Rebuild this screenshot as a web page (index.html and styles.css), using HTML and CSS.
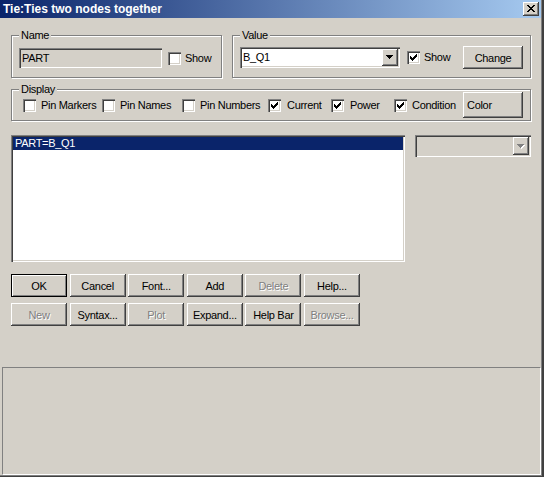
FILE: index.html
```html
<!DOCTYPE html>
<html>
<head>
<meta charset="utf-8">
<title>Tie:Ties two nodes together</title>
<link rel="stylesheet" href="styles.css">
</head>
<body>
<div class="window">
  <div class="titlebar">
    <span class="title">Tie:Ties two nodes together</span>
    <span class="close-btn">
      <svg class="x-icon" width="8" height="7" viewBox="0 0 8 7" shape-rendering="crispEdges"><path fill="#000" d="M0 0h2v1h-2z M6 0h2v1h-2z M1 1h2v1h-2z M5 1h2v1h-2z M2 2h4v1h-4z M3 3h2v1h-2z M2 4h4v1h-4z M1 5h2v1h-2z M5 5h2v1h-2z M0 6h2v1h-2z M6 6h2v1h-2z"/></svg>
    </span>
  </div>

  <div class="content">
    <div class="top-row">
      <div class="group name-group">
        <span class="legend">Name</span>
        <div class="group-row">
          <div class="field sunken">PART</div>
          <span class="checkbox sunken show-cb"></span>
          <span class="cb-label">Show</span>
        </div>
      </div>
      <div class="group value-group">
        <span class="legend">Value</span>
        <div class="group-row">
          <div class="combo sunken">
            <span class="combo-text">B_Q1</span>
            <span class="drop-btn raised">
              <svg class="arrow" width="7" height="4" viewBox="0 0 7 4" shape-rendering="crispEdges"><path fill="#000" d="M0 0h7v1h-7z M1 1h5v1h-5z M2 2h3v1h-3z M3 3h1v1h-1z"/></svg>
            </span>
          </div>
          <span class="checkbox sunken value-cb">
            <svg class="check" width="7" height="7" viewBox="0 0 7 7" shape-rendering="crispEdges"><path fill="#000" d="M6 0h1v1h-1z M5 1h2v1h-2z M0 2h1v1h-1z M4 2h3v1h-3z M0 3h2v1h-2z M3 3h3v1h-3z M0 4h5v1h-5z M1 5h3v1h-3z M2 6h1v1h-1z"/></svg>
          </span>
          <span class="cb-label">Show</span>
          <button class="btn raised change-btn">Change</button>
        </div>
      </div>
    </div>

    <div class="group display-group">
      <span class="legend">Display</span>
      <div class="display-row">
        <label class="cb-item"><span class="checkbox sunken"></span><span class="cb-label wide">Pin Markers</span></label>
        <label class="cb-item"><span class="checkbox sunken"></span><span class="cb-label wide">Pin Names</span></label>
        <label class="cb-item"><span class="checkbox sunken"></span><span class="cb-label wide">Pin Numbers</span></label>
        <label class="cb-item"><span class="checkbox sunken"><svg class="check" width="7" height="7" viewBox="0 0 7 7" shape-rendering="crispEdges"><path fill="#000" d="M6 0h1v1h-1z M5 1h2v1h-2z M0 2h1v1h-1z M4 2h3v1h-3z M0 3h2v1h-2z M3 3h3v1h-3z M0 4h5v1h-5z M1 5h3v1h-3z M2 6h1v1h-1z"/></svg></span><span class="cb-label wider">Current</span></label>
        <label class="cb-item"><span class="checkbox sunken"><svg class="check" width="7" height="7" viewBox="0 0 7 7" shape-rendering="crispEdges"><path fill="#000" d="M6 0h1v1h-1z M5 1h2v1h-2z M0 2h1v1h-1z M4 2h3v1h-3z M0 3h2v1h-2z M3 3h3v1h-3z M0 4h5v1h-5z M1 5h3v1h-3z M2 6h1v1h-1z"/></svg></span><span class="cb-label wider">Power</span></label>
        <label class="cb-item"><span class="checkbox sunken"><svg class="check" width="7" height="7" viewBox="0 0 7 7" shape-rendering="crispEdges"><path fill="#000" d="M6 0h1v1h-1z M5 1h2v1h-2z M0 2h1v1h-1z M4 2h3v1h-3z M0 3h2v1h-2z M3 3h3v1h-3z M0 4h5v1h-5z M1 5h3v1h-3z M2 6h1v1h-1z"/></svg></span><span class="cb-label wide">Condition</span></label>
        <button class="btn raised color-btn">Color</button>
      </div>
    </div>

    <div class="list-row">
      <div class="listbox sunken">
        <div class="list-item selected">PART=B_Q1</div>
      </div>
      <div class="combo sunken disabled-combo">
        <span class="combo-text"></span>
        <span class="drop-btn raised">
          <svg class="arrow" width="8" height="5" viewBox="0 0 8 5" shape-rendering="crispEdges"><path fill="#fff" d="M1 1h7v1h-7z M2 2h5v1h-5z M3 3h3v1h-3z M4 4h1v1h-1z"/><path fill="#808080" d="M0 0h7v1h-7z M1 1h5v1h-5z M2 2h3v1h-3z M3 3h1v1h-1z"/></svg>
        </span>
      </div>
    </div>

    <div class="buttons">
      <button class="btn default-btn">OK</button>
      <button class="btn raised">Cancel</button>
      <button class="btn raised">Font...</button>
      <button class="btn raised">Add</button>
      <button class="btn raised disabled">Delete</button>
      <button class="btn raised">Help...</button>
      <button class="btn raised disabled">New</button>
      <button class="btn raised">Syntax...</button>
      <button class="btn raised disabled">Plot</button>
      <button class="btn raised">Expand...</button>
      <button class="btn raised">Help Bar</button>
      <button class="btn raised disabled">Browse...</button>
    </div>
  </div>

  <div class="status"></div>
</div>
</body>
</html>
```

FILE: styles.css
```css
* {
  box-sizing: border-box;
}

html,
body {
  margin: 0;
  padding: 0;
}

body {
  background: #d4d0c8;
  font-family: "Liberation Sans", Arial, sans-serif;
  font-size: 11px;
  letter-spacing: -0.3px;
  color: #000;
}

.window {
  width: 544px;
  height: 477px;
  background: #d4d0c8;
  border-right: 2px solid #404040;
  border-bottom: 1px solid #404040;
  box-shadow: inset -1px -1px 0 #808080;
  display: flex;
  flex-direction: column;
}

/* Title bar */
.titlebar {
  height: 18px;
  margin-right: 1px;
  background: linear-gradient(to right, #0a246a, #a6caf0);
  display: flex;
  align-items: center;
  padding: 0 2px 0 3px;
}

.title {
  flex: 1;
  color: #fff;
  font-weight: bold;
  font-size: 12px;
  letter-spacing: 0;
  line-height: 18px;
  white-space: nowrap;
}

.close-btn {
  display: block;
  width: 16px;
  height: 14px;
  background: #d4d0c8;
  box-shadow: inset -1px -1px 0 #404040, inset 1px 1px 0 #fff, inset -2px -2px 0 #808080;
  padding: 3px 0 0 4px;
}

.x-icon {
  display: block;
}

/* Edges */
.sunken {
  box-shadow: inset 1px 1px 0 #808080, inset 2px 2px 0 #404040, inset -1px -1px 0 #fff, inset -2px -2px 0 #d4d0c8;
}

.raised {
  background: #d4d0c8;
  box-shadow: inset -1px -1px 0 #404040, inset 1px 1px 0 #fff, inset -2px -2px 0 #808080;
}

/* Content */
.content {
  padding: 0 11px;
  display: flex;
  flex-direction: column;
}

.top-row {
  display: flex;
  gap: 10px;
  margin-top: 17px;
}

.group {
  display: flow-root;
  border: 1px solid #808080;
  box-shadow: inset 1px 1px 0 #fff, 1px 1px 0 #fff;
  padding-left: 7px;
}

.legend {
  display: block;
  width: fit-content;
  height: 13px;
  line-height: 13px;
  margin: -7px 0 -6px 0;
  padding: 0 2px;
  background: #d4d0c8;
}

.name-group {
  width: 211px;
  height: 43px;
}

.value-group {
  width: 299px;
  height: 43px;
}

.group-row {
  display: flex;
  align-items: center;
}

.name-group .group-row {
  margin-top: 12px;
  height: 20px;
}

.value-group .group-row {
  margin-top: 10px;
  height: 23px;
  padding-right: 7px;
}

.field {
  width: 143px;
  height: 20px;
  background: #d4d0c8;
  padding-left: 3px;
  line-height: 20px;
}

.checkbox {
  flex: none;
  display: block;
  width: 13px;
  height: 13px;
  background: #fff;
  padding: 3px 0 0 3px;
}

.check {
  display: block;
}

.show-cb {
  margin-left: 6px;
}

.value-cb {
  margin-left: 7px;
}

.cb-label {
  margin-left: 4px;
  white-space: nowrap;
  line-height: 13px;
}

.cb-label.wide {
  margin-left: 5px;
}

.cb-label.wider {
  margin-left: 6px;
}

.combo {
  flex: none;
  display: flex;
  width: 160px;
  height: 21px;
  background: #fff;
  padding: 2px;
}

.combo-text {
  flex: 1;
  padding-left: 1px;
  line-height: 17px;
}

.drop-btn {
  flex: none;
  display: block;
  width: 16px;
  height: 17px;
  padding: 6px 0 0 4px;
}

.arrow {
  display: block;
}

/* Buttons */
.btn {
  font: inherit;
  letter-spacing: inherit;
  color: #000;
  border: none;
  margin: 0;
  padding: 0;
  height: 23px;
  display: flex;
  align-items: center;
  justify-content: center;
  background: #d4d0c8;
  white-space: nowrap;
}

.btn.disabled {
  color: #808080;
  text-shadow: 1px 1px 0 #fff;
}

.default-btn {
  box-shadow: inset 0 0 0 1px #000, inset 2px 2px 0 #fff, inset -2px -2px 0 #808080;
}

.change-btn {
  width: 60px;
  margin-left: auto;
}

/* Display group */
.display-group {
  margin-top: 11px;
  height: 32px;
}

.display-row {
  display: grid;
  grid-template-columns: 79px 80px 86px 63px 63px 69px 60px;
  align-items: center;
  height: 26px;
  margin: 2px 0 0 4px;
}

.cb-item {
  display: flex;
  align-items: center;
}

.color-btn {
  width: 60px;
  height: 26px;
  justify-content: flex-start;
  padding-left: 4px;
}

/* List row */
.list-row {
  display: flex;
  align-items: flex-start;
  gap: 10px;
  margin-top: 14px;
}

.listbox {
  width: 394px;
  height: 127px;
  background: #fff;
  padding: 2px;
}

.list-item {
  height: 13px;
  line-height: 13px;
  padding-left: 2px;
}

.list-item.selected {
  background: #0a246a;
  color: #fff;
}

.disabled-combo {
  width: 116px;
  height: 22px;
  background: #d4d0c8;
}

.disabled-combo .drop-btn {
  height: 18px;
  padding: 7px 0 0 4px;
}

/* Button grid */
.buttons {
  display: grid;
  grid-template-columns: repeat(6, 56px);
  grid-auto-rows: 23px;
  column-gap: 2.6px;
  row-gap: 6px;
  margin-top: 12px;
}

/* Status panel */
.status {
  margin: auto 1px 1px 2px;
  height: 108px;
  border-top: 1px solid #808080;
  border-left: 1px solid #808080;
  border-bottom: 1px solid #fff;
  border-right: 1px solid #fff;
}
```
